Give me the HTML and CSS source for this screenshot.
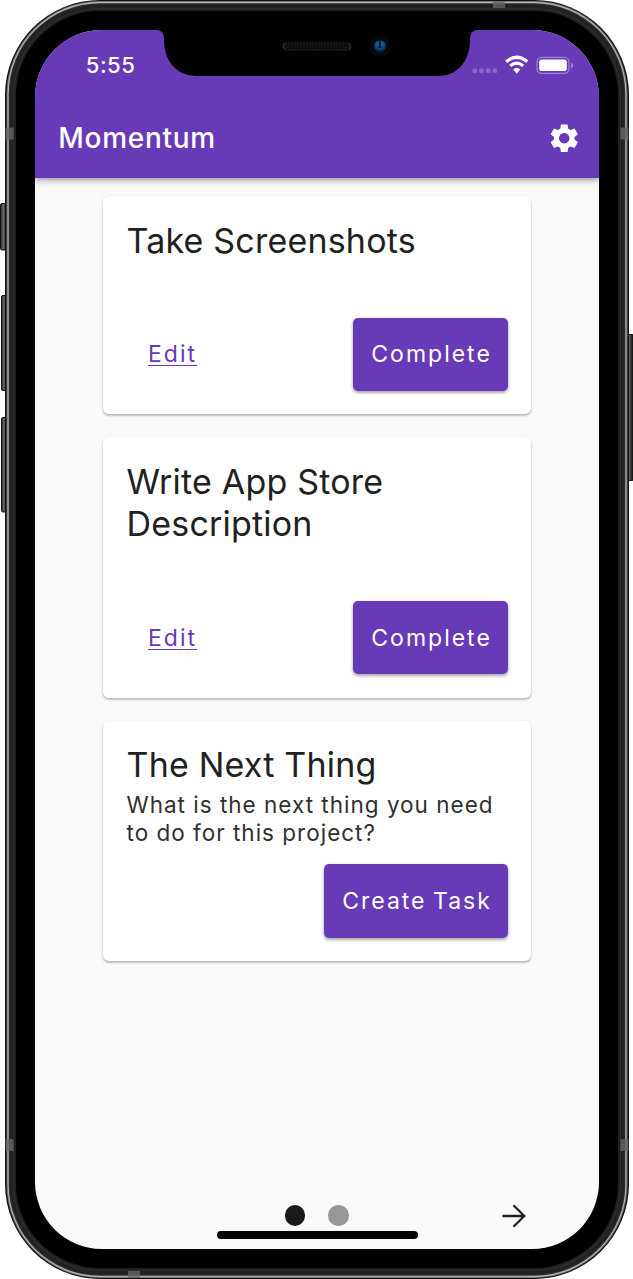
FILE: index.html
```html
<!DOCTYPE html>
<html lang="en">
<head>
<meta charset="utf-8">
<title>Momentum</title>
<link rel="stylesheet" href="styles.css">
</head>
<body>
<div class="phone">
  <svg class="frame" viewBox="0 0 633 1279" aria-hidden="true">
    <defs>
      <linearGradient id="key" x1="0" x2="1" y1="0" y2="0">
        <stop offset="0" stop-color="#1c1c1c"/><stop offset=".35" stop-color="#6a6c6c"/><stop offset=".7" stop-color="#2c2e2e"/><stop offset="1" stop-color="#050505"/>
      </linearGradient>
    </defs>
    <g stroke="#151515" stroke-width="1" fill="url(#key)">
      <rect x=".5" y="203.500" width="8" height="46.500" rx="1.500"/>
      <rect x="1.500" y="295.500" width="7" height="95" rx="1.500"/>
      <rect x="1.500" y="417.500" width="7" height="94.500" rx="1.500"/>
      <rect x="626.500" y="334.500" width="7" height="146" rx="1.500"/>
    </g>
    <rect x="5" y="0" width="624" height="1279" rx="95" fill="#111"/>
    <rect x="6.500" y="1" width="621" height="1277" rx="93.500" fill="#66666a"/>
    <rect x="7.500" y="1.800" width="619" height="1275.400" rx="92.500" fill="#b4b0b4"/>
    <rect x="8.700" y="3.300" width="616.600" height="1272.400" rx="91" fill="#303030"/>
    <rect x="9.700" y="4.300" width="614.600" height="1270.400" rx="90" fill="#222"/>
    <rect x="13" y="8" width="608" height="1263" rx="87" fill="#2f2f2f"/>
    <rect x="14.200" y="9.200" width="605.600" height="1260.600" rx="86" fill="#1e1e1e"/>
    <rect x="16" y="11" width="602" height="1257" rx="84" fill="#000"/>
    <g fill="#666" fill-opacity=".8">
      <rect x="5.500" y="127.500" width="8" height="12"/><rect x="620.500" y="127.500" width="8" height="12"/>
      <rect x="5.500" y="1139" width="8" height="12"/><rect x="620.500" y="1139" width="8" height="12"/>
      <rect x="493" y="1" width="12" height="7"/><rect x="128" y="1271" width="12" height="7"/>
    </g>
  </svg>

  <div class="screen">
    <header class="appbar">
      <div class="status">
        <span class="time">5:55</span>
        <svg class="signals" width="102" height="24" viewBox="0 0 102 24" aria-hidden="true">
          <g fill="#fff" fill-opacity=".22"><rect x=".5" y="15.500" width="4.500" height="4.500" rx="1.200"/><rect x="7.200" y="15.500" width="4.500" height="4.500" rx="1.200"/><rect x="13.900" y="15.500" width="4.500" height="4.500" rx="1.200"/><rect x="20.600" y="15.500" width="4.500" height="4.500" rx="1.200"/></g>
          <g fill="none" stroke="#fff" stroke-width="3.200">
            <path d="M34.200 8.700Q44.700 -.2 55.200 8.700"/><path d="M38.200 12.900Q44.700 7.400 51.200 12.900"/>
          </g>
          <path d="M41.200 16.400Q44.700 13.500 48.200 16.400L44.700 20.800Z" fill="#fff"/>
          <rect x="65" y="4.300" width="32" height="16" rx="4.600" fill="none" stroke="#fff" stroke-opacity=".36" stroke-width="1.300"/>
          <rect x="67.200" y="6.500" width="27.600" height="11.600" rx="2.600" fill="#fff"/>
          <path d="M99 9.500Q101.200 10.300 101.200 12.500T99 15.500Z" fill="#fff" fill-opacity=".4"/>
        </svg>
      </div>
      <div class="toolbar">
        <h1 class="brand">Momentum</h1>
        <svg class="gear" viewBox="0 0 24 24" aria-hidden="true"><path fill="#fff" d="M19.140 12.940c.040-.300.060-.610.060-.940 0-.320-.020-.640-.070-.940l2.030-1.580c.180-.140.230-.410.120-.610l-1.920-3.320c-.120-.220-.370-.290-.590-.220l-2.390.960c-.500-.380-1.030-.700-1.620-.940l-.360-2.540c-.040-.240-.240-.410-.480-.410h-3.840c-.240 0-.430.170-.470.410l-.360 2.540c-.590.240-1.130.570-1.620.940l-2.390-.960c-.220-.080-.470 0-.590.220L2.740 8.870c-.120.210-.080.470.120.610l2.030 1.580c-.050.300-.090.630-.090.940s.020.640.070.940l-2.030 1.580c-.180.140-.230.410-.120.610l1.920 3.320c.120.220.370.290.590.220l2.390-.960c.500.380 1.030.700 1.620.940l.360 2.540c.050.240.240.410.480.410h3.840c.240 0 .440-.170.470-.410l.360-2.540c.590-.240 1.130-.560 1.620-.940l2.390.960c.220.080.470 0 .590-.220l1.920-3.320c.120-.220.070-.470-.120-.610l-2.010-1.580zM12 15.600c-1.980 0-3.600-1.620-3.600-3.600s1.620-3.600 3.600-3.600 3.600 1.620 3.600 3.600-1.620 3.600-3.600 3.600z"/></svg>
      </div>
    </header>

    <main class="cards">
      <article class="card">
        <h2 class="title">Take Screenshots</h2>
        <div class="actions"><a class="edit">Edit</a><button class="button">Complete</button></div>
      </article>
      <article class="card">
        <h2 class="title">Write App Store<br>Description</h2>
        <div class="actions"><a class="edit">Edit</a><button class="button">Complete</button></div>
      </article>
      <article class="card prompt">
        <h2 class="title">The Next Thing</h2>
        <p class="hint">What is the next thing you need<br>to do for this project?</p>
        <div class="actions end"><button class="button">Create Task</button></div>
      </article>
    </main>

    <footer class="pager">
      <span class="dot active"></span><span class="dot"></span>
      <svg class="next" viewBox="0 0 24 24" aria-hidden="true"><path fill="none" stroke="#222" stroke-width="2.300" d="M.5 12H22M11.500 1.200 22.300 12 11.500 22.800"/></svg>
    </footer>
    <div class="home-bar"></div>
  </div>

  <svg class="notch" viewBox="0 0 330 50" aria-hidden="true">
    <defs>
      <pattern id="mesh" width="3" height="3" patternUnits="userSpaceOnUse"><rect width="3" height="3" fill="#0c0c0c"/><circle cx="1" cy="1" r=".7" fill="#2a2a2a"/></pattern>
      <radialGradient id="lens" cx=".5" cy=".3" r=".7"><stop offset="0" stop-color="#1580c8"/><stop offset=".55" stop-color="#084a85"/><stop offset="1" stop-color="#020b1c"/></radialGradient>
    </defs>
    <path d="M6 0V2C11 2 14 5 14 11C14 32 25 48 48 48H287C309 48 320 32 320 11C320 5 323 2 328 2V0Z" fill="#000"/>
    <rect x="132.500" y="13.500" width="69" height="9.500" rx="4.750" fill="url(#mesh)"/>
    <path d="M134.500 15q-2.500 3.200 0 6.500M199.500 15q2.500 3.200 0 6.500" fill="none" stroke="#444" stroke-width=".8"/>
    <circle cx="230" cy="18.500" r="10.500" fill="#07080a"/>
    <circle cx="230" cy="18.500" r="6" fill="url(#lens)"/>
    <path d="M229.200 13h1.400l1 7h-3.200z" fill="#031429"/>
  </svg>
</div>
</body>
</html>
```

FILE: styles.css
```css
* { box-sizing: border-box; }
body { margin: 0; background: #fff; font-family: Inter, "Liberation Sans", sans-serif; }
h1, h2, p { margin: 0; font-weight: 400; }

.phone { position: relative; width: 633px; height: 1279px; padding: 30px 34.5px 30.5px 35.3px; overflow: hidden; }
.frame { position: absolute; inset: 0; width: 633px; height: 1279px; }
.screen { position: relative; display: flex; flex-direction: column; height: 1218.500px; border-radius: 67px; overflow: hidden; background: #fafafa; }
.notch { position: absolute; left: 150px; top: 28px; width: 330px; height: 50px; }

.appbar { flex: none; height: 148px; background: #673ab7; color: #fff; box-shadow: 0 2px 4px rgba(0,0,0,.24), 0 4px 8px rgba(0,0,0,.14); }
.status { display: flex; justify-content: space-between; align-items: center; height: 70px; padding: 0 25px 0 50.500px; }
.time { font-size: 22px; font-weight: 500; letter-spacing: .5px; }
.toolbar { display: flex; justify-content: space-between; align-items: center; height: 76px; padding: 0 17px 0 23px; }
.brand { font-size: 28px; font-weight: 500; letter-spacing: .7px; }
.gear { width: 34.500px; height: 34.500px; }

.cards { flex: 1; display: flex; flex-direction: column; gap: 23.100px; padding: 18px 67.400px 0 67.700px; }
.card { padding: 23.500px 23.100px 23.300px 23.500px; background: #fff; border-radius: 6px; box-shadow: 0 2px 2px rgba(0,0,0,.16), 0 1px 3px rgba(0,0,0,.16); }
.title { color: #212121; font-size: 34px; line-height: 42px; letter-spacing: .2px; }
.actions { display: flex; justify-content: space-between; align-items: center; margin-top: 56px; padding-left: 21.500px; }
.actions.end { justify-content: flex-end; margin-top: 18px; }
.edit { color: #673ab7; font-size: 23px; letter-spacing: 2px; text-decoration: underline; text-decoration-thickness: 1.200px; text-underline-offset: 3px; }
.button { height: 73.500px; padding: 0 16.200px 0 18.400px; border: 0; border-radius: 5px; background: #673ab7; color: #fff; font: 400 23px Inter, "Liberation Sans", sans-serif; letter-spacing: 2px; word-spacing: -2px; box-shadow: 0 2px 3px rgba(0,0,0,.26), 0 1px 4px rgba(0,0,0,.14); }
.hint { margin-top: 5px; color: #303030; font-size: 22.500px; line-height: 27.500px; letter-spacing: 1px; white-space: nowrap; }

.pager { display: grid; grid-template-columns: 20.600px 20.600px 1fr; column-gap: 22.800px; align-items: center; height: 26px; margin-bottom: -1px; padding: 0 73px 0 249.500px; }
.dot { width: 20.600px; height: 20.600px; border-radius: 50%; background: #979797; }
.dot.active { background: #1a1a1a; }
.next { justify-self: end; width: 24px; height: 24px; }
.home-bar { flex: none; width: 201px; height: 7.500px; margin: 3.500px auto 10px 181.500px; border-radius: 4px; background: #000; }
```
